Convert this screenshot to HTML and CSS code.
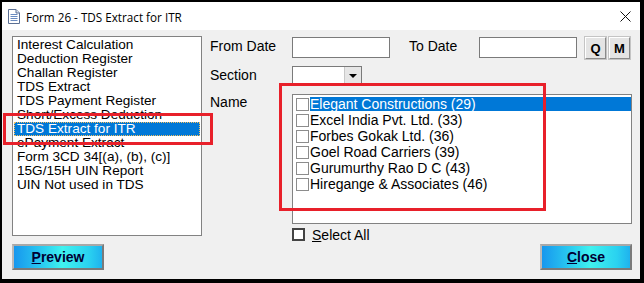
FILE: index.html
```html
<!DOCTYPE html>
<html>
  <head>
    <meta charset="UTF-8" />
    <title>Form 26 - TDS Extract for ITR</title>
    <link rel="stylesheet" href="styles.css">
  </head>
  <body>
    <div class="window">
      <div class="titlebar">
        <svg class="title-icon" width="12" height="15" viewBox="0 0 12 15">
          <path d="M0.5 0.5 H8 L11.5 4 V14.5 H0.5 Z" fill="#fff" stroke="#5b6f94" />
          <path d="M8 0.5 V4 H11.5" fill="#dfe6f2" stroke="#5b6f94" />
          <path d="M2.5 5.5 H9.5 M2.5 7.5 H9.5 M2.5 9.5 H9.5 M2.5 11.5 H9.5" stroke="#6a8bc0" />
        </svg>
        <span class="title-text">Form 26 - TDS Extract for ITR</span>
        <svg class="title-close" width="11" height="11" viewBox="0 0 11 11">
          <path d="M0.5 0.5 L10.5 10.5 M10.5 0.5 L0.5 10.5" stroke="#111" stroke-width="1" />
        </svg>
      </div>
      <div class="body">
        <div class="left">
          <ul class="reports">
            <li>Interest Calculation</li>
            <li>Deduction Register</li>
            <li>Challan Register</li>
            <li>TDS Extract</li>
            <li>TDS Payment Register</li>
            <li>Short/Excess Deduction</li>
            <li class="selected">TDS Extract for ITR</li>
            <li>ePayment Extract</li>
            <li>Form 3CD 34[(a), (b), (c)]</li>
            <li>15G/15H UIN Report</li>
            <li>UIN Not used in TDS</li>
          </ul>
          <button class="action"><u>P</u>review</button>
        </div>

        <div class="form">
          <div class="row dates">
            <label class="lbl">From Date</label>
            <div class="field date"></div>
            <label class="lbl to">To Date</label>
            <div class="field date"></div>
            <button class="small q">Q</button>
            <button class="small">M</button>
          </div>
          <div class="row section">
            <label class="lbl">Section</label>
            <div class="combo">
              <div class="combo-text"></div>
              <div class="combo-btn"><span class="arrow"></span></div>
            </div>
          </div>
          <div class="row names-row">
            <label class="lbl">Name</label>
            <ul class="names">
              <li><span class="box"></span><span class="nm selected">Elegant Constructions (29)</span></li>
              <li><span class="box"></span><span class="nm">Excel India Pvt. Ltd. (33)</span></li>
              <li><span class="box"></span><span class="nm">Forbes Gokak Ltd. (36)</span></li>
              <li><span class="box"></span><span class="nm">Goel Road Carriers (39)</span></li>
              <li><span class="box"></span><span class="nm">Gurumurthy Rao D C (43)</span></li>
              <li><span class="box"></span><span class="nm">Hiregange &amp; Associates (46)</span></li>
            </ul>
          </div>
          <div class="select-all">
            <span class="box dark"></span>
            <span><u>S</u>elect All</span>
          </div>
          <div class="footer">
            <button class="action"><u>C</u>lose</button>
          </div>
        </div>

        <div class="mark mark-report"></div>
        <div class="mark mark-names"></div>
      </div>
    </div>
  </body>
</html>
```

FILE: styles.css
```css
html,
body {
  margin: 0;
  padding: 0;
}
body {
  background: #000;
  font-family: "Liberation Sans", Arial, sans-serif;
  font-size: 14px;
  color: #000;
}
.window {
  width: 638px;
  height: 277px;
  border-style: solid;
  border-color: #000;
  border-width: 2px 4px 4px 2px;
  background: #f0f0f0;
}
.titlebar {
  height: 28px;
  background: #fff;
  display: flex;
  align-items: center;
  padding: 0 0 0 6px;
}
.title-icon {
  margin-top: 1px;
}
.title-text {
  font-family: "Open Sans", "Noto Sans", sans-serif;
  font-size: 11.7px;
  margin-left: 6px;
  margin-top: 1px;
  color: #000;
}
.title-close {
  margin-left: auto;
  margin-right: 9px;
}
.body {
  position: relative;
  display: flex;
  height: 249px;
  box-sizing: border-box;
  padding: 6px 0 0 10px;
}

/* left list */
.left {
  width: 190px;
  display: flex;
  flex-direction: column;
  gap: 8px;
}
.reports {
  height: 200px;
  box-sizing: border-box;
  margin: 0;
  padding: 1px 0 0 0;
  list-style: none;
  background: #fff;
  border: 1px solid #828282;
  overflow: hidden;
}
.reports li {
  height: 14px;
  line-height: 14px;
  font-size: 13.6px;
  margin: 0 1px;
  padding-left: 3px;
  white-space: nowrap;
}
.reports li.selected {
  background: #0078d7;
  color: #fff;
  outline: 1px dotted #f5c060;
  outline-offset: -1px;
}

/* buttons */
.action {
  width: 92px;
  height: 26px;
  padding: 0;
  font-family: "Liberation Sans", Arial, sans-serif;
  font-weight: bold;
  font-size: 14px;
  color: #000033;
  border: 2px solid;
  border-color: #a8a8a8 #7a7a7a #7a7a7a #b8b8b8;
  background: linear-gradient(90deg, #1797ee 0%, #2cd0f0 35%, #40f2ef 55%, #2ad2f0 85%, #1fb2ee 100%);
}
.small {
  width: 21px;
  height: 22px;
  padding: 0;
  font-family: "Liberation Sans", Arial, sans-serif;
  font-weight: bold;
  font-size: 13px;
  background: #e4e4e4;
  border: 1px solid;
  border-color: #fff #8a8a8a #8a8a8a #fff;
  box-shadow: 0 0 0 1px #c4c4c4;
}

/* right form */
.form {
  width: 422px;
  margin-left: 8px;
  padding-top: 1px;
  display: flex;
  flex-direction: column;
}
.row {
  display: flex;
  align-items: center;
}
.lbl {
  width: 82px;
  flex: none;
}
.dates {
  height: 22px;
  align-items: flex-start;
}
.dates .lbl {
  line-height: 18px;
}
.lbl.to {
  width: 70px;
  margin-left: 19px;
}
.field {
  height: 21px;
  box-sizing: border-box;
  background: #fff;
  border: 1px solid #7a7a7a;
}
.date {
  width: 98px;
}
.small.q {
  margin-left: 8px;
  margin-right: 3px;
}
.section {
  margin-top: 7px;
  height: 18px;
}
.combo {
  width: 70px;
  height: 18px;
  box-sizing: border-box;
  border: 1px solid #7a7a7a;
  background: #fff;
  display: flex;
}
.combo-text {
  flex: 1;
}
.combo-btn {
  width: 16px;
  background: #e6e6e6;
  border-left: 1px solid #c8c8c8;
  display: flex;
  align-items: center;
  justify-content: center;
}
.arrow {
  width: 0;
  height: 0;
  border-left: 4px solid transparent;
  border-right: 4px solid transparent;
  border-top: 4px solid #000;
  margin-top: 2px;
}
.names-row {
  margin-top: 10px;
  align-items: flex-start;
}
.names-row .lbl {
  line-height: 16px;
}
.names {
  width: 340px;
  height: 130px;
  box-sizing: border-box;
  margin: 0;
  padding: 1px 0 0 3px;
  list-style: none;
  background: #fff;
  border: 1px solid #828282;
}
.names li {
  height: 16px;
  display: flex;
  align-items: center;
}
.box {
  width: 13px;
  height: 13px;
  box-sizing: border-box;
  border: 1px solid #8c8c8c;
  background: #fff;
  flex: none;
}
.nm {
  flex: 1;
  height: 14px;
  line-height: 14px;
  margin-left: 1px;
  white-space: nowrap;
}
.nm.selected {
  background: #0078d7;
  color: #fff;
}
.select-all {
  margin-top: 4px;
  margin-left: 82px;
  height: 13px;
  display: flex;
  align-items: center;
  gap: 7px;
}
.box.dark {
  border: 2px solid #444;
}
.footer {
  margin-top: 3px;
  display: flex;
  justify-content: flex-end;
}

/* red annotation frames */
.mark {
  position: absolute;
  border: 3px solid #e8202a;
  box-sizing: border-box;
}
.mark-report {
  left: 1px;
  top: 83px;
  width: 210px;
  height: 32px;
}
.mark-names {
  left: 277px;
  top: 53px;
  width: 267px;
  height: 128px;
}
```
